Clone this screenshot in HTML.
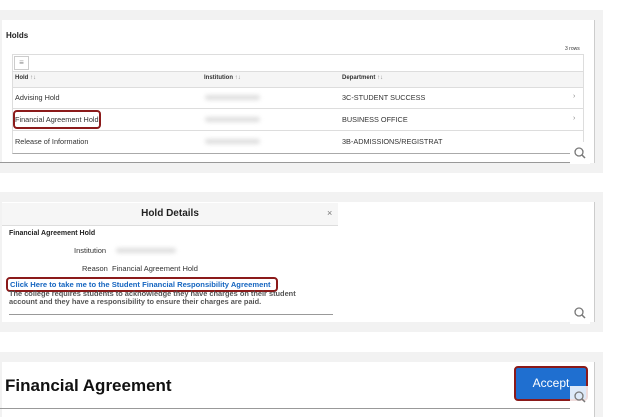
<!DOCTYPE html><html><head><style>
body{margin:0;width:624px;height:417px;background:#fff;position:relative;overflow:hidden;font-family:"Liberation Sans",sans-serif;}
.a{position:absolute}
.g{background:#f2f2f2}
.w{background:#fff}
.t{font-size:7px;color:#333;white-space:nowrap}
.blur{background:#ddd;filter:blur(2px);height:5px;border-radius:3px}
.mag{width:20px;height:22px;background:#fff}
</style></head><body>
<div class="a g" style="left:0;top:10px;width:603px;height:163px"></div>
<div class="a w" style="left:2px;top:20px;width:592px;height:143px;border-right:1px solid #ccc"></div>
<div class="a" style="left:6px;top:31px;font-size:8px;font-weight:bold;color:#222">Holds</div>
<div class="a" style="left:565px;top:46px;font-size:5px;color:#333">3 rows</div>
<div class="a" style="left:12px;top:54px;width:570px;height:98px;border:1px solid #ddd;border-bottom:1px solid #aaa"></div>
<div class="a" style="left:14px;top:56px;width:13px;height:12px;border:1px solid #ccc;font-size:8px;color:#888;text-align:center;line-height:12px">≡</div>
<div class="a" style="left:13px;top:71px;width:570px;height:15px;background:#f5f5f5;border-top:1px solid #ddd;border-bottom:1px solid #ddd"></div>
<div class="a t" style="left:15px;top:75px;font-size:6px;font-weight:bold">Hold <span style="font-weight:normal;color:#888">↑↓</span></div>
<div class="a t" style="left:204px;top:75px;font-size:6px;font-weight:bold">Institution <span style="font-weight:normal;color:#888">↑↓</span></div>
<div class="a t" style="left:342px;top:75px;font-size:6px;font-weight:bold">Department <span style="font-weight:normal;color:#888">↑↓</span></div>
<div class="a" style="left:13px;top:108px;width:570px;border-top:1px solid #ddd"></div>
<div class="a" style="left:13px;top:130px;width:570px;border-top:1px solid #ddd"></div>
<div class="a t" style="left:15px;top:93px;font-size:7.3px">Advising Hold</div>
<div class="a t" style="left:15px;top:115px;font-size:7.3px">Financial Agreement Hold</div>
<div class="a" style="left:13px;top:110px;width:84px;height:15px;border:2px solid #8b1a1a;border-radius:4px"></div>
<div class="a t" style="left:15px;top:137px;font-size:7.3px">Release of Information</div>
<div class="a blur" style="left:205px;top:95px;width:55px"></div>
<div class="a blur" style="left:205px;top:117px;width:55px"></div>
<div class="a blur" style="left:205px;top:139px;width:55px"></div>
<div class="a t" style="left:342px;top:93px;font-size:7.3px">3C-STUDENT SUCCESS</div>
<div class="a t" style="left:342px;top:115px;font-size:7.3px">BUSINESS OFFICE</div>
<div class="a t" style="left:342px;top:137px;font-size:7.3px">3B-ADMISSIONS/REGISTRAT</div>
<div class="a t" style="left:573px;top:93px;color:#888">›</div>
<div class="a t" style="left:573px;top:115px;color:#888">›</div>
<div class="a" style="left:0;top:162px;width:570px;border-top:1px solid #999"></div>
<div class="a mag" style="left:570px;top:142px"><svg width="20" height="22"><circle cx="9" cy="10" r="4" fill="none" stroke="#777" stroke-width="1.3"/><line x1="12" y1="13" x2="15" y2="16" stroke="#777" stroke-width="1.5"/></svg></div>

<div class="a g" style="left:0;top:192px;width:603px;height:140px"></div>
<div class="a w" style="left:2px;top:202px;width:592px;height:120px;border-right:1px solid #ccc"></div>
<div class="a" style="left:2px;top:203px;width:336px;height:22px;background:#f6f6f6;border-bottom:1px solid #ddd;font-size:10px;font-weight:bold;color:#222;text-align:center;line-height:22px">Hold Details</div>
<div class="a" style="left:327px;top:208px;font-size:9px;color:#777">×</div>
<div class="a t" style="left:9px;top:230px;font-weight:bold;color:#222">Financial Agreement Hold</div>
<div class="a t" style="left:74px;top:246px;font-size:7.5px">Institution</div>
<div class="a blur" style="left:116px;top:248px;width:60px"></div>
<div class="a t" style="left:82px;top:264px;font-size:7.5px">Reason&nbsp;&nbsp;Financial Agreement Hold</div>
<div class="a t" style="left:10px;top:280px;color:#1565c0;font-weight:bold;font-size:7.6px">Click Here to take me to the Student Financial Responsibility Agreement</div>
<div class="a" style="left:6px;top:277px;width:268px;height:11px;border:2px solid #8b1a1a;border-radius:4px"></div>
<div class="a t" style="left:9px;top:290px;color:#555;font-weight:bold;line-height:8px;font-size:7.4px">The college requires students to acknowledge they have charges on their student<br>account and they have a responsibility to ensure their charges are paid.</div>
<div class="a" style="left:9px;top:314px;width:324px;border-top:1px solid #999"></div>
<div class="a mag" style="left:570px;top:302px"><svg width="20" height="22"><circle cx="9" cy="10" r="4" fill="none" stroke="#777" stroke-width="1.3"/><line x1="12" y1="13" x2="15" y2="16" stroke="#777" stroke-width="1.5"/></svg></div>

<div class="a g" style="left:0;top:352px;width:603px;height:65px"></div>
<div class="a w" style="left:2px;top:362px;width:592px;height:55px;border-right:1px solid #ccc"></div>
<div class="a" style="left:5px;top:376px;font-size:17px;font-weight:bold;color:#111">Financial Agreement</div>
<div class="a" style="left:514px;top:366px;width:70px;height:31px;background:#1f6fd0;border:2px solid #8b1a1a;border-radius:4px;color:#fff;font-size:12px;line-height:31px;text-align:center">Accept</div>
<div class="a" style="left:0;top:408px;width:570px;border-top:1px solid #999"></div>
<div class="a mag" style="left:570px;top:386px;background:rgba(255,255,255,.85)"><svg width="20" height="22"><circle cx="9" cy="10" r="4" fill="none" stroke="#777" stroke-width="1.3"/><line x1="12" y1="13" x2="15" y2="16" stroke="#777" stroke-width="1.5"/></svg></div>
</body></html>
